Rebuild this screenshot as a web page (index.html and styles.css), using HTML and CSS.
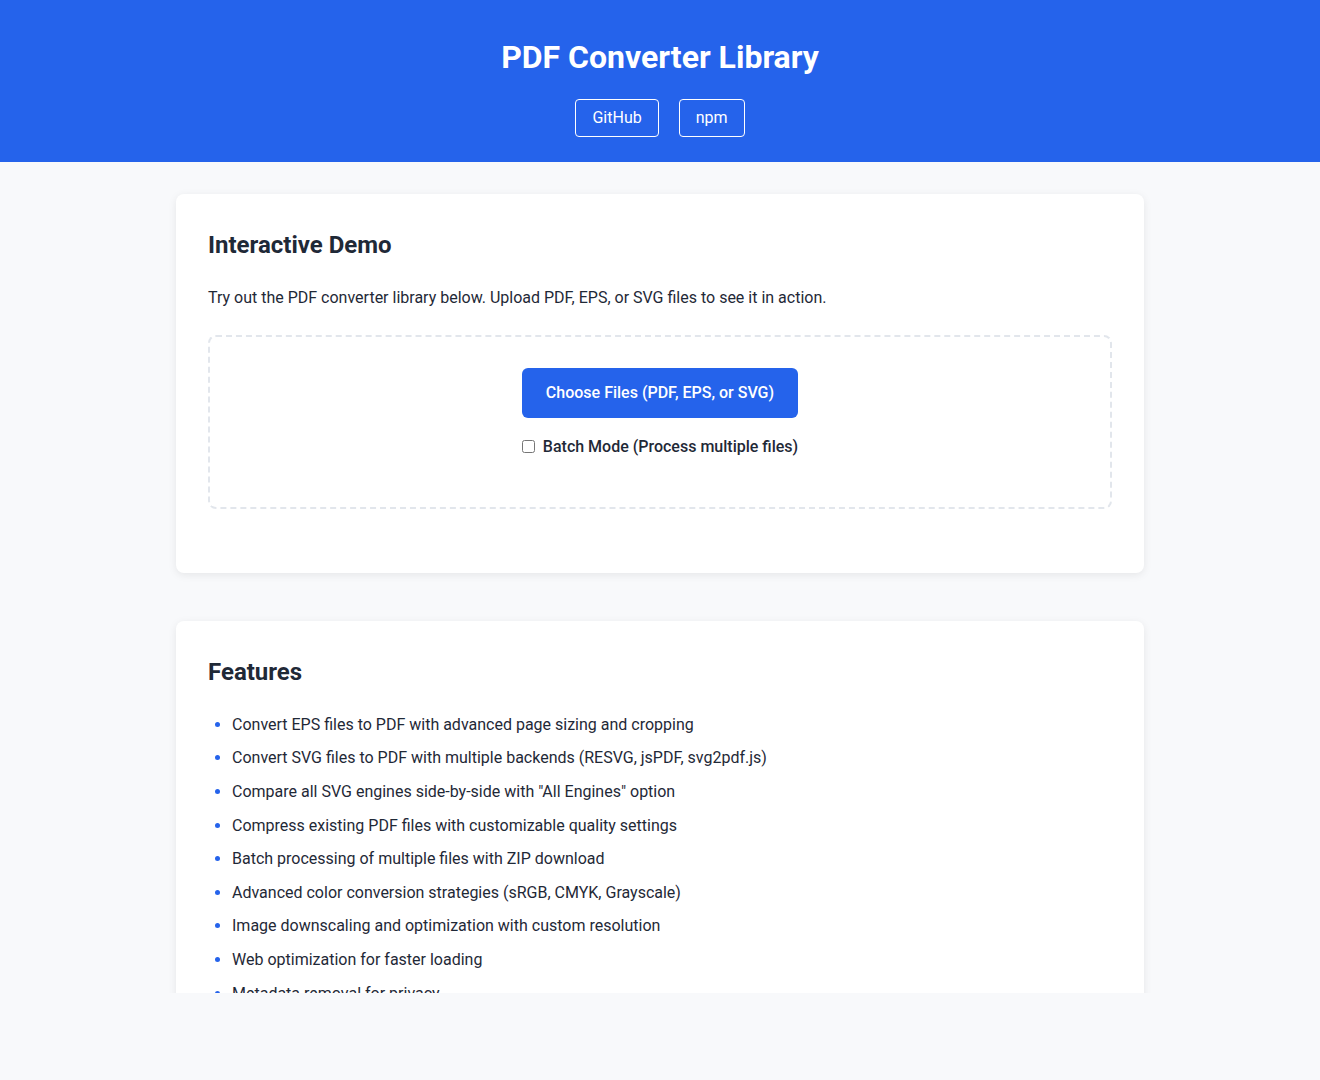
FILE: index.html
```html
<!DOCTYPE html>
<html lang="en">
<head>
<meta charset="utf-8">
<title>PDF Converter Library</title>
<link rel="stylesheet" href="styles.css">
</head>
<body>
<div class="viewport">
  <header class="site-header">
    <h1 class="site-title">PDF Converter Library</h1>
    <nav class="header-links">
      <a class="header-link" href="#">GitHub</a>
      <a class="header-link" href="#">npm</a>
    </nav>
  </header>
  <main class="main">
    <section class="card">
      <h2 class="card-title">Interactive Demo</h2>
      <p class="card-text">Try out the PDF converter library below. Upload PDF, EPS, or SVG files to see it in action.</p>
      <div class="dropzone">
        <button class="primary-btn" type="button">Choose Files (PDF, EPS, or SVG)</button>
        <label class="batch-label"><input type="checkbox" class="batch-check"> Batch Mode (Process multiple files)</label>
      </div>
    </section>
    <section class="card">
      <h2 class="card-title feature-card-title">Features</h2>
      <ul class="feature-list">
        <li>Convert EPS files to PDF with advanced page sizing and cropping</li>
        <li>Convert SVG files to PDF with multiple backends (RESVG, jsPDF, svg2pdf.js)</li>
        <li>Compare all SVG engines side-by-side with "All Engines" option</li>
        <li>Compress existing PDF files with customizable quality settings</li>
        <li>Batch processing of multiple files with ZIP download</li>
        <li>Advanced color conversion strategies (sRGB, CMYK, Grayscale)</li>
        <li>Image downscaling and optimization with custom resolution</li>
        <li>Web optimization for faster loading</li>
        <li>Metadata removal for privacy</li>
        <li>Font embedding and subsetting options</li>
        <li>Works entirely in the browser, no server required</li>
      </ul>
    </section>
  </main>
</div>
</body>
</html>
```
FILE: styles.css
```css
* { box-sizing: border-box; }
html, body { margin: 0; padding: 0; }
body {
  background: #f8f9fb;
  font-family: Roboto, "Liberation Sans", Arial, sans-serif;
  color: #1f2937;
  line-height: 1.6;
  font-size: 16px;
}
.viewport {
  height: 993px;
  overflow: hidden;
}
.site-header {
  background: #2563eb;
  color: #fff;
  text-align: center;
  padding: 32px 16px 25px;
}
.site-title {
  margin: 0 0 16px;
  font-size: 32px;
  font-weight: 700;
  line-height: 1.6;
}
.header-links {
  display: flex;
  justify-content: center;
  gap: 20px;
}
.header-link {
  color: #fff;
  text-decoration: none;
  border: 1px solid #fff;
  border-radius: 4px;
  padding: 5px 16px;
  font-size: 16px;
  line-height: 25.6px;
}
.main {
  max-width: 968px;
  margin: 32px auto 0;
  display: flex;
  flex-direction: column;
  gap: 48px;
}
.card {
  background: #fff;
  border-radius: 8px;
  padding: 32px;
  box-shadow: 0 2px 8px rgba(0, 0, 0, 0.08);
}
.card-title {
  margin: 0 0 21px;
  font-size: 24px;
  font-weight: 700;
  line-height: 1.6;
  color: #1f2937;
}
.feature-card-title {
  margin-bottom: 20px;
}
.card-text {
  margin: 0 0 24px;
}
.dropzone {
  border: 2px dashed #e2e6ec;
  border-radius: 8px;
  padding: 31px 32px 48px;
  margin-bottom: 32px;
  display: flex;
  flex-direction: column;
  align-items: center;
}
.primary-btn {
  background: #2563eb;
  color: #fff;
  border: none;
  border-radius: 6px;
  height: 50px;
  padding: 0 24px;
  font-family: inherit;
  font-size: 16px;
  font-weight: 500;
  line-height: 26px;
}
.batch-label {
  margin-top: 16px;
  display: flex;
  align-items: center;
  gap: 5px;
  font-weight: 500;
}
.batch-check {
  width: 13px;
  height: 13px;
  margin: 0 3px 0 0;
}
.feature-list {
  margin: 0;
  padding-left: 24px;
}
.feature-list li {
  margin-bottom: 8px;
}
.feature-list li::marker {
  color: #2563eb;
}
```
